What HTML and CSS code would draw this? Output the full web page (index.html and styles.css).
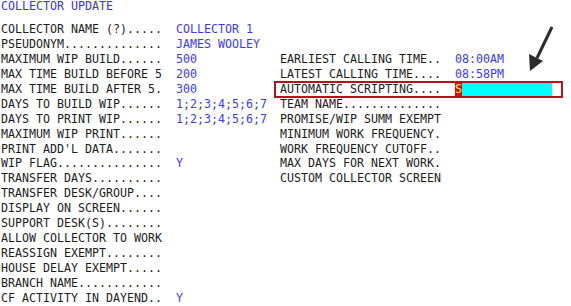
FILE: index.html
```html
<!DOCTYPE html>
<html>
<head>
    <title>Collector Update</title>
    <link rel="stylesheet" href="styles.css">
</head>
<body>
    <div id="screen">
        <div class="title">COLLECTOR UPDATE</div>
        <div class="panes">
            <div class="pane">
                <div class="row"><span>COLLECTOR NAME (?).....</span><span class="val">COLLECTOR 1</span></div>
                <div class="row"><span>PSEUDONYM..............</span><span class="val">JAMES WOOLEY</span></div>
                <div class="row"><span>MAXIMUM WIP BUILD......</span><span class="val">500</span></div>
                <div class="row"><span>MAX TIME BUILD BEFORE 5</span><span class="val">200</span></div>
                <div class="row"><span>MAX TIME BUILD AFTER 5.</span><span class="val">300</span></div>
                <div class="row"><span>DAYS TO BUILD WIP......</span><span class="val">1;2;3;4;5;6;7</span></div>
                <div class="row"><span>DAYS TO PRINT WIP......</span><span class="val">1;2;3;4;5;6;7</span></div>
                <div class="row"><span>MAXIMUM WIP PRINT......</span><span class="val"></span></div>
                <div class="row"><span>PRINT ADD'L DATA.......</span><span class="val"></span></div>
                <div class="row"><span>WIP FLAG...............</span><span class="val">Y</span></div>
                <div class="row"><span>TRANSFER DAYS..........</span><span class="val"></span></div>
                <div class="row"><span>TRANSFER DESK/GROUP....</span><span class="val"></span></div>
                <div class="row"><span>DISPLAY ON SCREEN......</span><span class="val"></span></div>
                <div class="row"><span>SUPPORT DESK(S)........</span><span class="val"></span></div>
                <div class="row"><span>ALLOW COLLECTOR TO WORK</span><span class="val"></span></div>
                <div class="row"><span>REASSIGN EXEMPT........</span><span class="val"></span></div>
                <div class="row"><span>HOUSE DELAY EXEMPT.....</span><span class="val"></span></div>
                <div class="row"><span>BRANCH NAME............</span><span class="val"></span></div>
                <div class="row"><span>CF ACTIVITY IN DAYEND..</span><span class="val">Y</span></div>
            </div>
            <div class="pane right">
                <div class="row"><span>EARLIEST CALLING TIME..</span><span class="val">08:00AM</span></div>
                <div class="row"><span>LATEST CALLING TIME....</span><span class="val">08:58PM</span></div>
                <div class="row focus">
                    <span>AUTOMATIC SCRIPTING....</span>
                    <span class="field"><span class="cursor">S</span><span class="blank"></span></span>
                </div>
                <div class="row"><span>TEAM NAME..............</span><span class="val"></span></div>
                <div class="row"><span>PROMISE/WIP SUMM EXEMPT</span><span class="val"></span></div>
                <div class="row"><span>MINIMUM WORK FREQUENCY.</span><span class="val"></span></div>
                <div class="row"><span>WORK FREQUENCY CUTOFF..</span><span class="val"></span></div>
                <div class="row"><span>MAX DAYS FOR NEXT WORK.</span><span class="val"></span></div>
                <div class="row"><span>CUSTOM COLLECTOR SCREEN</span><span class="val"></span></div>
            </div>
        </div>

        <svg class="arrow" width="45" height="60" viewBox="0 0 45 60">
            <line x1="32" y1="7" x2="17" y2="38" stroke="#2b2b2b" stroke-width="3"/>
            <polygon points="9,34 23,41 10,51" fill="#2b2b2b"/>
        </svg>
    </div>
</body>
</html>
```
FILE: styles.css
```css
body{
    margin:0;
    background-color:white;
}

#screen{
    position:relative;
    width:571px;
    height:306px;
    padding-left:1px;
    font-family:"DejaVu Sans Mono", monospace;
    font-size:11.63px;
    color:#1c1c1c;
    overflow:hidden;
}

.title{
    line-height:13px;
    margin-bottom:9px;
    color:#3434f4;
}

.panes{
    display:grid;
    grid-template-columns:279px 1fr;
}

.right{
    padding-top:29.9px;
}

.row{
    display:grid;
    grid-template-columns:175px auto;
    align-items:center;
    height:14.95px;
    line-height:14.95px;
    white-space:pre;
}

.val{
    color:#3a3aff;
}

.focus{
    position:relative;
}

.focus::after{
    content:"";
    position:absolute;
    top:-1px;
    bottom:-1px;
    left:-6px;
    right:9px;
    border:2px solid #b3141a;
}

.field{
    display:flex;
    height:13px;
    line-height:13px;
}

.cursor{
    width:7px;
    background-color:#e60000;
    color:#ffff30;
}

.blank{
    width:90px;
    background-color:cyan;
}

.arrow{
    position:absolute;
    left:520px;
    top:20px;
}
```
